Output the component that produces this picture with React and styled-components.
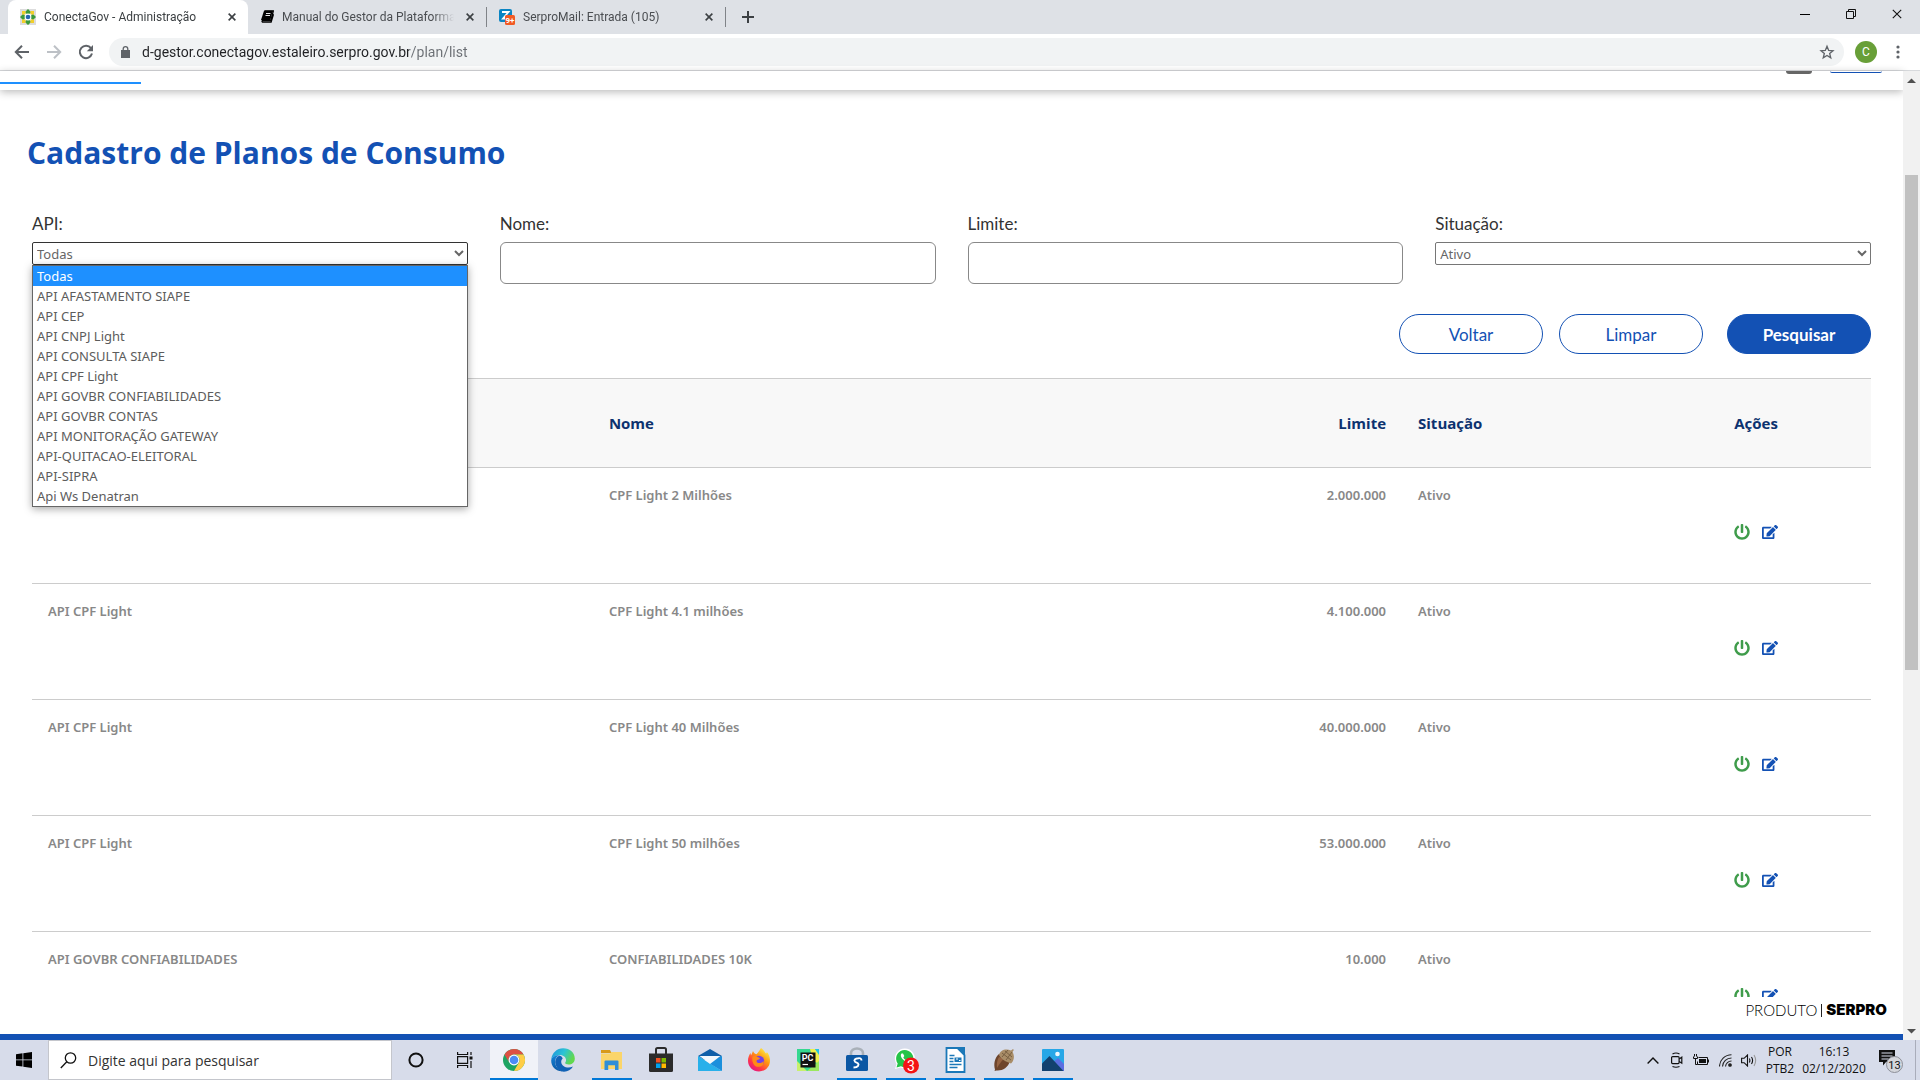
import React from "react";
import styled, { createGlobalStyle } from "styled-components";
import { FaPowerOff, FaEdit } from "react-icons/fa";

const ui = `"Open Sans", "Noto Sans", sans-serif`;
const data = `"Noto Sans", "Open Sans", sans-serif`;
const chrome = `Roboto, "Open Sans", sans-serif`;
const label = `Lato, "Open Sans", sans-serif`;

const GlobalStyle = createGlobalStyle`
  *, *::before, *::after { box-sizing: border-box; }
  body { margin: 0; background: #fff; font-family: ${ui}; overflow: hidden; }
  button { font: inherit; cursor: pointer; }
  svg { display: block; flex: none; }
`;

const Desktop = styled.div`
  display: flex;
  flex-direction: column;
  height: 100vh;
`;

/* ---------- browser frame ---------- */

const TabStrip = styled.div`
  display: flex;
  height: 34px;
  padding-left: 8px;
  background: #dee1e6;
`;

const Tab = styled.div`
  display: flex;
  align-items: center;
  gap: 8px;
  width: ${(p) => (p.$active ? 240 : 238)}px;
  padding: 0 8px 0 12px;
  border-radius: 8px 8px 0 0;
  background: ${(p) => (p.$active ? "#fff" : "transparent")};
  color: ${(p) => (p.$active ? "#3c4043" : "#4a4d51")};
  font: 12px ${chrome};
`;

const TabTitle = styled.span`
  flex: 1;
  overflow: hidden;
  white-space: nowrap;
  mask-image: linear-gradient(to right, #000 88%, transparent);
`;

const TabRule = styled.span`
  align-self: center;
  width: 1px;
  height: 20px;
  background: #808388;
`;

const IconButton = styled.button`
  display: grid;
  place-items: center;
  width: ${(p) => p.$size || 24}px;
  height: ${(p) => p.$size || 24}px;
  padding: 0;
  border: 0;
  background: none;
  color: ${(p) => p.$color || "#3c4043"};
`;

const NewTab = styled(IconButton)`
  align-self: center;
  margin-left: 8px;
`;

const WindowControls = styled.div`
  display: flex;
  align-items: center;
  height: 28px;
  margin-left: auto;
`;

const WindowButton = styled(IconButton)`
  width: 46px;
  color: #111;
`;

const Toolbar = styled.div`
  display: flex;
  align-items: center;
  height: 37px;
  padding: 0 10px 0 6px;
  border-bottom: 1px solid #d8dadd;
`;

const NavButtons = styled.div`
  display: flex;
  width: 103px;
`;

const AddressBar = styled.label`
  display: flex;
  flex: 1;
  align-items: center;
  gap: 12px;
  height: 28px;
  padding: 0 5px 0 12px;
  border-radius: 14px;
  background: #f1f3f4;
`;

const AddressInput = styled.input`
  flex: 1;
  padding: 0;
  border: 0;
  outline: 0;
  color: #202124;
  font: 14px ${chrome};
  background: linear-gradient(to right, #202124 267px, #6b6f74 267px);
  background-clip: text;
  -webkit-text-fill-color: transparent;
`;

const Avatar = styled.button`
  width: 22px;
  height: 22px;
  margin: 0 9px 0 11px;
  padding: 0;
  border: 0;
  border-radius: 50%;
  background: #689f38;
  color: #fff;
  font: 12px/22px Roboto, sans-serif;
`;

/* ---------- web page ---------- */

const Viewport = styled.div`
  display: flex;
  flex: 1;
  min-height: 0;
`;

const Page = styled.div`
  display: flex;
  flex: 1;
  flex-direction: column;
  min-width: 0;
`;

const SiteHeader = styled.header`
  display: flex;
  flex: none;
  align-items: flex-start;
  justify-content: space-between;
  height: 19px;
  box-shadow: 0 2px 8px rgba(0, 0, 0, 0.28);
`;

const LoadingBar = styled.div`
  width: 141px;
  height: 13px;
  border-bottom: 2px solid #1e90ff;
`;

const HeaderTools = styled.div`
  display: flex;
  gap: 18px;
  margin-right: 21px;
`;

const HeaderMenu = styled.div`
  width: 26px;
  height: 3px;
  border-radius: 0 0 3px 3px;
  background: #666;
`;

const HeaderLogin = styled.div`
  width: 52px;
  height: 2px;
  border-bottom: 1px solid #1351b4;
  border-radius: 0 0 12px 12px;
`;

const Content = styled.main`
  flex: 1;
  min-height: 0;
  overflow: hidden;
  padding: 39px 32px 0;
`;

const Title = styled.h1`
  margin: 0 -5px;
  color: #1351b4;
  font-size: 30px;
  font-weight: 700;
  line-height: 48px;
`;

const Filters = styled.form`
  display: grid;
  grid-template-columns: repeat(4, 1fr);
  gap: 30px 32px;
  margin-top: 34px;
`;

const Field = styled.div`
  position: relative;
  display: flex;
  flex-direction: column;
`;

const FieldLabel = styled.label`
  margin-bottom: 5px;
  color: #333;
  font: 17px/26px ${label};
`;

const Select = styled.select`
  height: 23px;
  padding: 0;
  border: 1px solid ${(p) => (p.$open ? "#333" : "#767676")};
  border-radius: 2px;
  outline: 0;
  background: #fff;
  color: #666;
  font: 13px ${data};
`;

const TextInput = styled.input`
  height: 42px;
  padding: 0 12px;
  border: 1px solid #888;
  border-radius: 6px;
  font: 16px ${ui};
`;

const Options = styled.ul`
  position: absolute;
  top: 54px;
  left: 0;
  right: 0;
  z-index: 2;
  margin: 0;
  padding: 0;
  border: 1px solid #666;
  background: #fff;
  box-shadow: 0 2px 8px rgba(0, 0, 0, 0.35);
  list-style: none;
`;

const Option = styled.li`
  padding: 0 4px;
  background: ${(p) => (p.$selected ? "#1e90ff" : "#fff")};
  color: ${(p) => (p.$selected ? "#fff" : "#5c5c5c")};
  font: 13px/20px ${data};
`;

const Actions = styled.div`
  display: flex;
  grid-column: 1 / -1;
  justify-content: flex-end;
  gap: 16px;
`;

const PillButton = styled.button`
  width: 144px;
  height: 40px;
  margin-left: ${(p) => (p.$primary ? 8 : 0)}px;
  border: 1px solid #1351b4;
  border-radius: 20px;
  background: ${(p) => (p.$primary ? "#1351b4" : "#fff")};
  color: ${(p) => (p.$primary ? "#fff" : "#1351b4")};
  font: ${(p) => (p.$primary ? 700 : 400)} 17px ${label};
`;

const Table = styled.table`
  width: 100%;
  margin-top: 24px;
  border-collapse: collapse;
  table-layout: fixed;
`;

const HeadCell = styled.th`
  width: ${(p) => p.$width};
  height: 89px;
  padding: 0 16px;
  border-top: 1px solid #ccc;
  border-bottom: 1px solid #ccc;
  background: #f8f8f8;
  color: #0c326f;
  font-size: 15px;
  font-weight: 700;
  text-align: ${(p) => p.$align || "left"};
`;

const Cell = styled.td`
  height: 116px;
  padding: 17px 16px;
  border-bottom: 1px solid #ccc;
  color: #888;
  font: 600 13px/20px ${data};
  text-align: ${(p) => p.$align || "left"};
  vertical-align: ${(p) => p.$valign || "top"};
`;

const RowActions = styled.div`
  display: flex;
  justify-content: center;
  gap: 4px;
  padding-top: 12px;
`;

const Footer = styled.footer`
  display: flex;
  flex: none;
  align-items: flex-start;
  justify-content: flex-end;
  gap: 4px;
  height: 43px;
  padding: 4px 16px 0 0;
  border-bottom: 6px solid #1351b4;
  color: #000;
  font: 300 15px/18px ${label};
`;

const FooterRule = styled.span`
  width: 1px;
  height: 13px;
  margin-top: 3px;
  background: #222;
`;

const Brand = styled.strong`
  font-family: Inter, Lato, sans-serif;
  font-weight: 900;
`;

const Scrollbar = styled.div`
  display: flex;
  flex-direction: column;
  align-items: center;
  width: 17px;
  padding: 7px 0 6px;
  background: #f1f1f1;
`;

const ScrollTrack = styled.div`
  flex: 1;
  width: 13px;
  padding-top: 92px;
`;

const Thumb = styled.div`
  height: 58%;
  background: #c1c1c1;
`;

/* ---------- taskbar ---------- */

const TaskbarRoot = styled.div`
  display: flex;
  height: 40px;
  background: #d7dcea;
  color: #111;
`;

const TaskButton = styled.button`
  position: relative;
  display: grid;
  place-items: center;
  width: ${(p) => p.$width || 48}px;
  height: 40px;
  margin-right: ${(p) => (p.$app ? 1 : 0)}px;
  padding: 0;
  border: 0;
  background: ${(p) => (p.$active ? "#f0f2f8" : "transparent")};

  &::after {
    content: "";
    position: absolute;
    bottom: 0;
    left: ${(p) => (p.$active ? 0 : 4)}px;
    right: ${(p) => (p.$active ? 0 : 4)}px;
    height: ${(p) => (p.$open || p.$active ? 2 : 0)}px;
    background: #0078d7;
  }
`;

const SearchBox = styled.label`
  display: flex;
  align-items: center;
  gap: 11px;
  width: 344px;
  padding-left: 11px;
  border: 1px solid #c4c6cc;
  background: #fff;
`;

const SearchInput = styled.input`
  flex: 1;
  min-width: 0;
  padding: 0;
  border: 0;
  outline: 0;
  background: transparent;
  font: 14px ${ui};
  &::placeholder { color: #333; opacity: 1; }
`;

const Tray = styled.div`
  display: flex;
  align-items: center;
  margin-left: auto;
`;

const TrayItem = styled.button`
  display: grid;
  place-items: center;
  width: ${(p) => p.$width || 24}px;
  height: 40px;
  padding: 0;
  border: 0;
  background: none;
`;

const TrayText = styled.div`
  width: ${(p) => p.$width}px;
  color: #111;
  font-size: 12px;
  line-height: 17px;
  text-align: center;
`;

const Peek = styled.div`
  width: 5px;
  height: 40px;
  margin-left: 2px;
  border-left: 1px solid #a9adba;
`;

/* ---------- small drawings ---------- */

const CloseIcon = ({ s = 8, w = 2 }) => (
  <svg width={s} height={s} viewBox="0 0 10 10" stroke="currentColor" strokeWidth={w}>
    <path d="M.8 .8l8.4 8.4M9.2 .8L.8 9.2" />
  </svg>
);

const Arrow = ({ flip }) => (
  <svg width="16" height="16" viewBox="0 0 16 16" fill="none" stroke="currentColor" strokeWidth="2">
    <path d={flip ? "M1 8h13M8 1.8L14.2 8 8 14.2" : "M15 8H2M8 1.8L1.8 8 8 14.2"} />
  </svg>
);

const Reload = () => (
  <svg width="16" height="16" viewBox="0 0 16 16">
    <path d="M13 4.2A6.2 6.2 0 1 0 14 9.6" fill="none" stroke="currentColor" strokeWidth="2" />
    <path d="M15 1v6.2H8.8z" fill="currentColor" />
  </svg>
);

const ConectaIcon = () => (
  <svg width="16" height="16" viewBox="0 0 16 16">
    <rect width="16" height="16" fill="#dcdcdc" />
    <path d="M8 0l3 3-1.5 2h-3L5 3zM8 16l3-3-1.5-2h-3L5 13z" fill="#3c9a3c" />
    <path d="M0 8l3-3 2 1.5v3L3 11zM16 8l-3-3-2 1.5v3l2 1.5z" fill="#3c9a3c" />
    <path d="M2 2h3.5v3.5H2zM10.5 2H14v3.5h-3.5zM2 10.5h3.5V14H2zM10.5 10.5H14V14h-3.5z" fill="#f2cf2a" />
    <circle cx="8" cy="8" r="3.4" fill="#fff" />
    <circle cx="8" cy="8" r="2.3" fill="#2467b3" />
  </svg>
);

const BookIcon = () => (
  <svg width="14" height="14" viewBox="0 0 14 14">
    <path d="M4.500 1h8.800l-2.500 9.500H2.500a1 1 0 0 0 0 1.700h8.600l2.400-8" fill="none" stroke="#000" strokeWidth="1.3" />
    <path d="M4 .8h8.800L10.400 10H1z" fill="#000" />
    <path d="M6 3.500h4.500M5.500 5.500H10" stroke="#fff" strokeWidth=".9" />
  </svg>
);

const MiniText = styled.text`
  font-family: Roboto, sans-serif;
  font-weight: ${(p) => p.$weight || 700};
  text-anchor: middle;
`;

const MailTabIcon = () => (
  <svg width="16" height="16" viewBox="0 0 16 16">
    <rect width="13" height="13" rx="2" fill="#0b85c3" />
    <path d="M3 3h6.500L4 9.500h3" fill="none" stroke="#fff" strokeWidth="1.8" />
    <rect x="6" y="6" width="10" height="10" rx="1.5" fill="#f15a24" />
    <MiniText x="11" y="14" fontSize="8" fill="#fff">9+</MiniText>
  </svg>
);

const Triangle = ({ down }) => (
  <svg width="9" height="5" viewBox="0 0 9 5">
    <path d={down ? "M0 0h9L4.5 4.5z" : "M0 5h9L4.5 .5z"} fill="#505050" />
  </svg>
);

const ChromeIcon = () => (
  <svg width="24" height="24" viewBox="0 0 24 24">
    <circle cx="12" cy="12" r="11" fill="#1da462" />
    <path d="M2.47 6.5A11 11 0 0 1 21.53 6.5H12A5.5 5.5 0 0 0 7.24 14.75z" fill="#dd5144" />
    <path d="M21.53 6.5A11 11 0 0 1 12 23l4.76-8.25A5.5 5.5 0 0 0 12 6.5z" fill="#ffcd46" />
    <circle cx="12" cy="12" r="5.4" fill="#fff" />
    <circle cx="12" cy="12" r="4.3" fill="#4c8bf5" />
  </svg>
);

const EdgeIcon = () => (
  <svg width="24" height="24" viewBox="0 0 24 24">
    <defs>
      <linearGradient id="edgeTop" x1="0" y1="0" x2="1" y2=".4">
        <stop offset="0" stopColor="#1b8fdc" />
        <stop offset=".55" stopColor="#2cc3d5" />
        <stop offset="1" stopColor="#62d84e" />
      </linearGradient>
      <linearGradient id="edgeLow" x1="0" y1="0" x2="0" y2="1">
        <stop offset="0" stopColor="#1383d8" />
        <stop offset="1" stopColor="#0c59a4" />
      </linearGradient>
    </defs>
    <path d="M.3 11.5C.8 5 6 .3 12.2.3 19 .3 23.8 5 23.8 10.5c0 4-3 6-6 6-2.500 0-4-1-3.600-2 .6-.8 1-1.700.8-3C14.6 8.5 11.6 7 8.5 7 4.800 7 1.500 8.800.3 11.500z" fill="url(#edgeTop)" />
    <path d="M.2 12.5C.6 9 4.5 7 8.3 7.3c-3 1.3-4.4 4-4.2 7 .3 4 3.2 7.5 7 9C5.500 23.5 0 19 .2 12.5z" fill="url(#edgeLow)" />
    <path d="M8.5 7.4c-3.500 1.600-4.800 5-4 8.600C5.500 20.500 9 23.700 13 23.700c3.800 0 7-2 9-5.200-5 2.500-11.500.5-11.800-4.500-.1-1.500.6-2.800 1.500-3.500-.5-1.600-1.700-2.700-3.200-3.100z" fill="#1162b5" />
  </svg>
);

const ExplorerIcon = () => (
  <svg width="22" height="22" viewBox="0 0 22 22">
    <path d="M0 1h9l1.500 3H0z" fill="#d89a1a" />
    <path d="M0 4.500h9L10.500 3H21v17H0z" fill="#fbd56a" />
    <path d="M3.500 21v-8.500q0-1 1-1h12q1 0 1 1V21h-3.500v-4.800H7.200V21z" fill="#2f8ed8" />
  </svg>
);

const StoreIcon = () => (
  <svg width="24" height="26" viewBox="0 0 24 26">
    <path d="M7 8V2.500Q7 1 8.500 1h7Q17 1 17 2.500V8" fill="none" stroke="#2b2b2b" strokeWidth="2" />
    <path d="M0 6.500h24V23.500Q24 25 22.500 25H1.500Q0 25 0 23.500z" fill="#2b2b2b" />
    <path d="M7 11h4.500v4.500H7z" fill="#f25022" />
    <path d="M12.500 11H17v4.500h-4.500z" fill="#7fba00" />
    <path d="M7 16.500h4.500V21H7z" fill="#00a4ef" />
    <path d="M12.500 16.500H17V21h-4.500z" fill="#ffb900" />
  </svg>
);

const MailIcon = () => (
  <svg width="24" height="22" viewBox="0 0 24 22">
    <path d="M0 7L12 0l12 7-6 4H6z" fill="#0f5fa8" />
    <path d="M0 7v15h24z" fill="#28b0ea" />
    <path d="M24 7v15L10 13.500z" fill="#1b8fdc" />
    <path d="M1.500 7h21L12 15z" fill="#f2f8fc" />
  </svg>
);

const FirefoxIcon = () => (
  <svg width="24" height="24" viewBox="0 0 24 24">
    <defs>
      <linearGradient id="fox" x1=".85" y1=".05" x2=".2" y2=".95">
        <stop offset="0" stopColor="#fff44f" />
        <stop offset=".4" stopColor="#ff980e" />
        <stop offset=".75" stopColor="#ff3647" />
        <stop offset="1" stopColor="#e31587" />
      </linearGradient>
    </defs>
    <path d="M14 0c3 2 3.500 4 5 5.500.8-.2.800-1.500.8-1.500C22 6 23 9.500 23 12.500 23 19 18 23.500 12 23.500S1 19 1 12.800c0-3.300 1.200-5.800 2.500-7.800L4 7.500C4.800 6 5.500 4.500 6 3c.5 1.500 1.500 2.700 3.500 3.200C11 5 12.500 2.500 14 0z" fill="url(#fox)" />
    <circle cx="12" cy="13" r="5.2" fill="#7542e5" />
    <path d="M5.500 8.500c2-1 4-.5 5.500.8l2 .7c-.5 1.500-2 1.500-3 2-1 1.500 0 3 2 3 2 .2 3.500-.5 4.500-2 .8 3.500-2 6-5.500 5.800C7 18.500 4.500 14 5.500 8.500z" fill="#ff8a16" />
  </svg>
);

const PyCharmIcon = () => (
  <svg width="22" height="22" viewBox="0 0 22 22">
    <path d="M0 0h22v22H0z" fill="#35d890" />
    <path d="M13 0h5l4 5v10l-6-3z" fill="#f0f04c" />
    <path d="M18 0h4v6z" fill="#22c5e8" />
    <path d="M0 12l10 10H0z" fill="#c8f06c" />
    <path d="M10 22l12-10v10z" fill="#9be85f" />
    <rect x="3.5" y="3.5" width="15" height="15" fill="#111" />
    <MiniText x="10.5" y="11.5" fontSize="9" fill="#fff">PC</MiniText>
    <path d="M5.500 15.500h5.500" stroke="#fff" strokeWidth="1.2" />
  </svg>
);

const VpnIcon = () => (
  <svg width="22" height="26" viewBox="0 0 22 26">
    <path d="M5 10V6a6 4.500 0 0 1 12 0v4" fill="none" stroke="#a9b0b8" strokeWidth="2.6" />
    <rect y="8" width="22" height="16" rx="1.5" fill="#0b57a4" />
    <path d="M15.500 13.500c0-2-1.500-2.500-3-2.300-3.500.3-5 2-3.500 3.500l2.800 1.600c1.500 1.300.7 4-4.300 4.200" fill="none" stroke="#fff" strokeWidth="1.9" />
  </svg>
);

const WhatsIcon = () => (
  <svg width="28" height="28" viewBox="0 0 28 28">
    <path d="M3 23l1.500-5A10 10 0 1 1 8.500 21.500z" fill="#fff" />
    <path d="M4.500 21.500l1.200-4A8.600 8.600 0 1 1 9 20.300z" fill="#25c448" />
    <path d="M9.500 7.500c-1.500 1.500-.5 4 1.500 6s4.500 3.500 6.500 2.200l-2-2.400-1.700.8c-1.200-.7-2-1.600-2.500-2.700l1-1.300-1.300-2.600z" fill="#fff" />
    <circle cx="19" cy="19.5" r="8" fill="#f41414" />
    <MiniText x="19" y="24.500" fontSize="14" $weight={400} fill="#fff">3</MiniText>
  </svg>
);

const WriterIcon = () => (
  <svg width="22" height="26" viewBox="0 0 22 26">
    <path d="M2.500 1h11L20.500 8v17h-18z" fill="#fff" stroke="#1b78b8" strokeWidth="1.8" />
    <path d="M12.500 0H21v9z" fill="#1b78b8" />
    <path d="M5.500 8.500h5M5.500 11.500h4M5.500 14.500h4M5.500 17.500h12M5.500 20.500h8" stroke="#1b78b8" strokeWidth="1.5" />
    <path d="M10.500 10.500h7V15h-7z" fill="#1b78b8" />
    <path d="M12 12h2M15 13.500h1.500" stroke="#fff" />
  </svg>
);

const AcornIcon = () => (
  <svg width="22" height="24" viewBox="0 0 22 24">
    <path d="M6 6C1.500 10 .5 16 2 21.500L1.500 23l2-.6C9 23 15 20 17 13z" fill="#6e452c" />
    <path d="M6 9c-2 3-2.500 7-2 11 2-3 4-7 7-9z" fill="#966443" />
    <path d="M6 7C7 2 13 0 18 2.500l2-1.500.8 1-1.300 2c2.500 4 1.500 9-1.500 11.500C13 14 8 11 6 7z" fill="#a98d68" />
    <path d="M9 5l9 7M12 3l7 6M9 9l6-7M13 12l6-8" stroke="#745b3e" strokeWidth=".9" />
  </svg>
);

const PhotosIcon = () => (
  <svg width="22" height="24" viewBox="0 0 22 24">
    <rect width="22" height="22" y="1" rx="1" fill="#27a7e7" />
    <path d="M12 23V13.500L16 10l6 6v7z" fill="#5b6ee1" />
    <path d="M0 15.500L7.500 8 21.500 23H0z" fill="#13416f" />
    <circle cx="15.500" cy="6" r="2.3" fill="#eef8ff" />
  </svg>
);

const apps = [
  ["Google Chrome", ChromeIcon, "active"],
  ["Microsoft Edge", EdgeIcon],
  ["Explorador de Arquivos", ExplorerIcon, "open"],
  ["Microsoft Store", StoreIcon],
  ["Email", MailIcon],
  ["Firefox", FirefoxIcon],
  ["PyCharm", PyCharmIcon],
  ["VPN Serpro", VpnIcon, "open"],
  ["WhatsApp", WhatsIcon, "open"],
  ["LibreOffice Writer", WriterIcon, "open"],
  ["SquirreL SQL", AcornIcon, "open"],
  ["Fotos", PhotosIcon, "open"],
];

const apis = [
  "Todas",
  "API AFASTAMENTO SIAPE",
  "API CEP",
  "API CNPJ Light",
  "API CONSULTA SIAPE",
  "API CPF Light",
  "API GOVBR CONFIABILIDADES",
  "API GOVBR CONTAS",
  "API MONITORAÇÃO GATEWAY",
  "API-QUITACAO-ELEITORAL",
  "API-SIPRA",
  "Api Ws Denatran",
];

const plans = [
  ["", "CPF Light 2 Milhões", "2.000.000"],
  ["API CPF Light", "CPF Light 4.1 milhões", "4.100.000"],
  ["API CPF Light", "CPF Light 40 Milhões", "40.000.000"],
  ["API CPF Light", "CPF Light 50 milhões", "53.000.000"],
  ["API GOVBR CONFIABILIDADES", "CONFIABILIDADES 10K", "10.000"],
];

function BrowserTabs() {
  return (
    <TabStrip>
      <Tab $active>
        <ConectaIcon />
        <TabTitle>ConectaGov - Administração</TabTitle>
        <IconButton $size={16} aria-label="Fechar guia"><CloseIcon /></IconButton>
      </Tab>
      <Tab>
        <BookIcon />
        <TabTitle>Manual do Gestor da Plataforma</TabTitle>
        <IconButton $size={16} aria-label="Fechar guia"><CloseIcon /></IconButton>
      </Tab>
      <TabRule />
      <Tab>
        <MailTabIcon />
        <TabTitle>SerproMail: Entrada (105)</TabTitle>
        <IconButton $size={16} aria-label="Fechar guia"><CloseIcon /></IconButton>
      </Tab>
      <TabRule />
      <NewTab $size={28} aria-label="Nova guia">
        <svg width="12" height="12" viewBox="0 0 12 12" stroke="currentColor" strokeWidth="2"><path d="M6 0v12M0 6h12" /></svg>
      </NewTab>
      <WindowControls>
        <WindowButton aria-label="Minimizar">
          <svg width="10" height="10" viewBox="0 0 10 10"><path d="M0 5h10v1H0z" /></svg>
        </WindowButton>
        <WindowButton aria-label="Restaurar">
          <svg width="10" height="10" viewBox="0 0 10 10" fill="none" stroke="#111"><path d="M.5 2.500h7v7h-7zM2.500 2.500v-2h7v7h-2" /></svg>
        </WindowButton>
        <WindowButton aria-label="Fechar"><CloseIcon s={10} w={1.1} /></WindowButton>
      </WindowControls>
    </TabStrip>
  );
}

function BrowserToolbar() {
  return (
    <Toolbar>
      <NavButtons>
        <IconButton $size={32} $color="#5f6368" aria-label="Voltar página"><Arrow /></IconButton>
        <IconButton $size={32} $color="#bdc1c6" aria-label="Avançar"><Arrow flip /></IconButton>
        <IconButton $size={32} $color="#5f6368" aria-label="Recarregar"><Reload /></IconButton>
      </NavButtons>
      <AddressBar>
        <svg width="9" height="12" viewBox="0 0 9 12">
          <path d="M0 4h9v8H0z" fill="#5f6368" />
          <path d="M2.200 4.500V3a2.300 2.300 0 0 1 4.600 0v1.500" fill="none" stroke="#5f6368" strokeWidth="1.3" />
        </svg>
        <AddressInput aria-label="Endereço" defaultValue="d-gestor.conectagov.estaleiro.serpro.gov.br/plan/list" />
        <IconButton $color="#5f6368" aria-label="Adicionar aos favoritos">
          <svg width="16" height="16" viewBox="0 0 24 24" fill="none" stroke="currentColor" strokeWidth="2">
            <path d="M12 3.500l2.500 6.100 6.500.5-5 4.200 1.600 6.400L12 17.200l-5.600 3.500L8 14.300l-5-4.200 6.500-.5z" />
          </svg>
        </IconButton>
      </AddressBar>
      <Avatar>C</Avatar>
      <IconButton $color="#5f6368" aria-label="Menu">
        <svg width="4" height="14" viewBox="0 0 4 14" fill="currentColor">
          <circle cx="2" cy="2" r="1.6" /><circle cx="2" cy="7" r="1.6" /><circle cx="2" cy="12" r="1.6" />
        </svg>
      </IconButton>
    </Toolbar>
  );
}

function FilterForm() {
  return (
    <Filters onSubmit={(e) => e.preventDefault()}>
      <Field>
        <FieldLabel htmlFor="api">API:</FieldLabel>
        <Select id="api" $open defaultValue="Todas">
          {apis.map((a) => <option key={a}>{a}</option>)}
        </Select>
        <Options role="listbox" aria-label="API">
          {apis.map((a, i) => (
            <Option key={a} role="option" aria-selected={i === 0} $selected={i === 0}>{a}</Option>
          ))}
        </Options>
      </Field>
      <Field>
        <FieldLabel htmlFor="nome">Nome:</FieldLabel>
        <TextInput id="nome" />
      </Field>
      <Field>
        <FieldLabel htmlFor="limite">Limite:</FieldLabel>
        <TextInput id="limite" />
      </Field>
      <Field>
        <FieldLabel htmlFor="situacao">Situação:</FieldLabel>
        <Select id="situacao" defaultValue="Ativo">
          <option>Ativo</option>
        </Select>
      </Field>
      <Actions>
        <PillButton type="button">Voltar</PillButton>
        <PillButton type="reset">Limpar</PillButton>
        <PillButton type="submit" $primary>Pesquisar</PillButton>
      </Actions>
    </Filters>
  );
}

function PlanTable() {
  return (
    <Table>
      <thead>
        <tr>
          <HeadCell $width="30.5%" aria-label="API" />
          <HeadCell $width="28%">Nome</HeadCell>
          <HeadCell $width="16%" $align="right">Limite</HeadCell>
          <HeadCell $width="13%">Situação</HeadCell>
          <HeadCell $width="12.5%" $align="center">Ações</HeadCell>
        </tr>
      </thead>
      <tbody>
        {plans.map(([api, nome, limite]) => (
          <tr key={nome}>
            <Cell>{api}</Cell>
            <Cell>{nome}</Cell>
            <Cell $align="right">{limite}</Cell>
            <Cell>Ativo</Cell>
            <Cell $valign="middle">
              <RowActions>
                <IconButton $color="#3f9c4b" aria-label="Desativar"><FaPowerOff size={16} /></IconButton>
                <IconButton $color="#1351b4" aria-label="Editar"><FaEdit size={16} /></IconButton>
              </RowActions>
            </Cell>
          </tr>
        ))}
      </tbody>
    </Table>
  );
}

function Taskbar() {
  return (
    <TaskbarRoot>
      <TaskButton aria-label="Iniciar">
        <svg width="16" height="16" viewBox="0 0 16 16"><path d="M0 2.200L6.500 1.300v6.200H0zM7.300 1.200L16 0v7.500H7.300zM0 8.300h6.500v6.200L0 13.700zM7.300 8.300H16V16l-8.700-1.300z" /></svg>
      </TaskButton>
      <SearchBox>
        <svg width="17" height="17" viewBox="0 0 17 17" fill="none" stroke="#111" strokeWidth="1.3"><circle cx="10.500" cy="6" r="5.2" /><path d="M6.800 9.800L.8 16" /></svg>
        <SearchInput aria-label="Pesquisar no computador" placeholder="Digite aqui para pesquisar" />
      </SearchBox>
      <TaskButton aria-label="Cortana">
        <svg width="16" height="16" viewBox="0 0 16 16"><circle cx="8" cy="8" r="6.6" fill="none" stroke="#111" strokeWidth="2" /></svg>
      </TaskButton>
      <TaskButton $width={50} aria-label="Visão de tarefas">
        <svg width="16" height="16" viewBox="0 0 16 16" fill="none" stroke="#111" strokeWidth="1.2">
          <path d="M.6 4.600h10v6.800H.6zM.6 0v2.500h10V0M.6 16v-2.500h10V16M14 0v3M14 9v7" />
          <path d="M12.500 4.500h3v3h-3z" fill="#111" stroke="none" />
        </svg>
      </TaskButton>
      {apps.map(([name, Icon, state]) => (
        <TaskButton key={name} $app aria-label={name} $active={state === "active"} $open={state === "open"}>
          <Icon />
        </TaskButton>
      ))}
      <Tray>
        <TrayItem aria-label="Mostrar ícones ocultos">
          <svg width="12" height="7" viewBox="0 0 12 7" fill="none" stroke="#111" strokeWidth="1.4"><path d="M.6 6.400L6 1l5.400 5.400" /></svg>
        </TrayItem>
        <TrayItem aria-label="Reunir agora">
          <svg width="12" height="16" viewBox="0 0 12 16" fill="none" stroke="#111" strokeWidth="1.2"><rect x=".6" y="4.6" width="7.5" height="7" rx="1" /><path d="M8.200 7l2.600-1.800v6L8.200 9.500M1.500 2Q5 0 8.500 2M1.500 14.500q3.500 1.500 7 0" /></svg>
        </TrayItem>
        <TrayItem aria-label="Bateria">
          <svg width="16" height="12" viewBox="0 0 16 12" fill="none" stroke="#111"><path d="M5.500 3.500h9v7h-10v-3M2.500 5v5.500h2M.5 2.500v2h4v-2M1.500 0v2.500M3.500 0v2.500" /><path d="M6 5h7v4H6zM15 5.500h1v3h-1z" fill="#111" stroke="none" /></svg>
        </TrayItem>
        <TrayItem aria-label="Rede">
          <svg width="13" height="13" viewBox="0 0 13 13" fill="none" stroke="#222" strokeWidth="1.1"><path d="M.5 12.500A12 12 0 0 1 12.500.8M3.500 12.500a9 9 0 0 1 9-8.500M6.500 12.500a6 6 0 0 1 6-5.500" /><circle cx="11" cy="11" r="1.3" fill="#222" /></svg>
        </TrayItem>
        <TrayItem aria-label="Volume">
          <svg width="16" height="13" viewBox="0 0 16 13" fill="none" stroke="#111" strokeWidth="1.1"><path d="M.6 4.300h2.500L6.500 1v11L3.100 8.700H.6zM8.300 4.500q1.200 2 0 4M10.500 3q2.200 3.500 0 7" /><path d="M13 1q3.300 5.500 0 11" stroke="#999" /></svg>
        </TrayItem>
        <TrayText $width={38}>POR<br />PTB2</TrayText>
        <TrayText $width={70}>16:13<br />02/12/2020</TrayText>
        <TrayItem $width={44} aria-label="Notificações">
          <svg width="26" height="26" viewBox="0 0 26 26">
            <path d="M1 3h16v12H8l-3 3.500V15H1z" fill="#111" />
            <path d="M3.500 6h11M3.500 9h11M3.500 12h7" stroke="#d7dcea" />
            <circle cx="16.500" cy="17.500" r="8" fill="#d4d6dc" stroke="#8c8f98" />
            <MiniText x="16.500" y="21.500" fontSize="11" $weight={400} fill="#111">13</MiniText>
          </svg>
        </TrayItem>
        <Peek />
      </Tray>
    </TaskbarRoot>
  );
}

export default function App() {
  return (
    <Desktop>
      <GlobalStyle />
      <BrowserTabs />
      <BrowserToolbar />
      <Viewport>
        <Page>
          <SiteHeader>
            <LoadingBar />
            <HeaderTools><HeaderMenu /><HeaderLogin /></HeaderTools>
          </SiteHeader>
          <Content>
            <Title>Cadastro de Planos de Consumo</Title>
            <FilterForm />
            <PlanTable />
          </Content>
          <Footer>PRODUTO<FooterRule /><Brand>SERPRO</Brand></Footer>
        </Page>
        <Scrollbar>
          <Triangle />
          <ScrollTrack><Thumb /></ScrollTrack>
          <Triangle down />
        </Scrollbar>
      </Viewport>
      <Taskbar />
    </Desktop>
  );
}
